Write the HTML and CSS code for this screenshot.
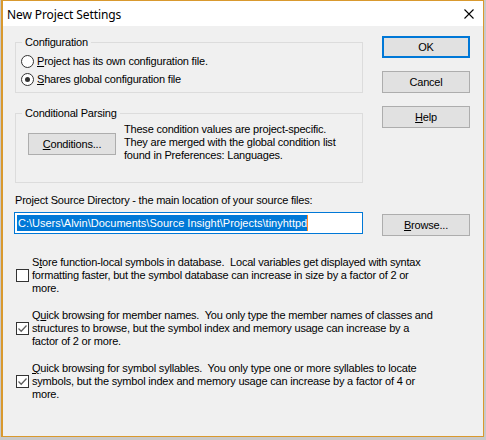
FILE: index.html
```html
<!DOCTYPE html>
<html>
<head>
<meta charset="utf-8">
<title>New Project Settings</title>
<link rel="stylesheet" href="styles.css">
</head>
<body>
<div class="window">
  <div class="titlebar">
    <span class="title">New Project Settings</span>
    <svg class="close" width="10" height="10" viewBox="0 0 10 10"><path d="M0.5 0.5 L9.5 9.5 M9.5 0.5 L0.5 9.5" stroke="#000" stroke-width="1.1" fill="none"/></svg>
  </div>
  <div class="dialog">
    <div class="top">
      <div class="left">
        <div class="group g1">
          <div class="group-title">Configuration</div>
          <div class="opts">
            <div class="opt"><span class="radio"></span><span><u>P</u>roject has its own configuration file.</span></div>
            <div class="opt"><span class="radio on"><span class="dot"></span></span><span><u>S</u>hares global configuration file</span></div>
          </div>
        </div>
        <div class="group g2">
          <div class="group-title">Conditional Parsing</div>
          <div class="cond-row">
            <button class="btn cond"><u>C</u>onditions...</button>
            <p class="cond-text">These condition values are project-specific.<br>They are merged with the global condition list<br>found in Preferences: Languages.</p>
          </div>
        </div>
      </div>
      <div class="right">
        <button class="btn default">OK</button>
        <button class="btn">Cancel</button>
        <button class="btn"><u>H</u>elp</button>
      </div>
    </div>
    <div class="dir-label">Pro<u>j</u>ect Source Directory - the main location of your source files:</div>
    <div class="dir-row">
      <div class="input"><span class="sel">C:\Users\Alvin\Documents\Source Insight\Projects\tinyhttpd</span><span class="caret"></span></div>
      <button class="btn browse"><u>B</u>rowse...</button>
    </div>
    <div class="checks">
      <div class="check-row">
        <span class="checkbox"></span>
        <p>S<u>t</u>ore function-local symbols in database.&nbsp; Local variables get displayed with syntax<br>formatting faster, but the symbol database can increase in size by a factor of 2 or<br>more.</p>
      </div>
      <div class="check-row">
        <span class="checkbox"><svg width="11" height="11" viewBox="0 0 11 11"><path d="M1.5 5.5 L4.2 8.2 L9.5 2.5" stroke="#5f5f5f" stroke-width="1.3" fill="none"/></svg></span>
        <p>Q<u>u</u>ick browsing for member names.&nbsp; You only type the member names of classes and<br>structures to browse, but the symbol index and memory usage can increase by a<br>factor of 2 or more.</p>
      </div>
      <div class="check-row">
        <span class="checkbox"><svg width="11" height="11" viewBox="0 0 11 11"><path d="M1.5 5.5 L4.2 8.2 L9.5 2.5" stroke="#5f5f5f" stroke-width="1.3" fill="none"/></svg></span>
        <p><u>Q</u>uick browsing for symbol syllables.&nbsp; You only type one or more syllables to locate<br>symbols, but the symbol index and memory usage can increase by a factor of 4 or<br>more.</p>
      </div>
    </div>
  </div>
</div>
</body>
</html>
```
FILE: styles.css
```css
html, body {
  margin: 0;
  padding: 0;
}
body {
  background: #c9c9c9;
  font-family: "Liberation Sans", Arial, sans-serif;
  font-size: 11px;
  color: #000;
  overflow: hidden;
}
.window {
  margin-left: 1px;
  width: 480px;
  height: 435px;
  border: 1px solid #d9992e;
  border-left-width: 2px;
  background: #f0f0f0;
}
.titlebar {
  height: 25px;
  background: #fff;
  display: flex;
  align-items: center;
  justify-content: space-between;
  padding-left: 4px;
}
.title {
  font-family: "Noto Sans", "Open Sans", sans-serif;
  font-size: 12px;
  letter-spacing: -0.1px;
  margin-top: 1px;
}
.close {
  margin-right: 9px;
  margin-top: 1px;
}
.dialog {
  padding: 10px 0 0 12px;
  letter-spacing: -0.2px;
  line-height: 13px;
}
.top {
  display: flex;
  gap: 19px;
  align-items: flex-start;
}
.left {
  width: 348px;
  display: flex;
  flex-direction: column;
}
.group {
  border: 1px solid #dcdcdc;
}
.g1 {
  margin-top: 6px;
}
.g2 {
  margin-top: 20px;
  padding-bottom: 20px;
}
.group-title {
  width: fit-content;
  height: 13px;
  line-height: 13px;
  margin: -7px 0 0 6px;
  padding: 0 3px;
  background: #f0f0f0;
}
.opts {
  padding: 3px 0 4px 5px;
}
.opt {
  height: 18px;
  display: flex;
  align-items: center;
}
.radio {
  width: 11px;
  height: 11px;
  border: 1px solid #333;
  border-radius: 50%;
  background: #fff;
  margin-right: 3px;
  display: flex;
  align-items: center;
  justify-content: center;
}
.dot {
  width: 5px;
  height: 5px;
  border-radius: 50%;
  background: #333;
}
.cond-row {
  margin-top: 3px;
  padding-left: 12px;
  display: flex;
  gap: 8px;
}
.cond-text {
  margin: 0;
  white-space: nowrap;
}
.btn {
  box-sizing: border-box;
  width: 88px;
  height: 22px;
  padding: 0;
  background: #e1e1e1;
  border: 1px solid #adadad;
  font-family: "Liberation Sans", Arial, sans-serif;
  font-size: 11px;
  letter-spacing: -0.2px;
  color: #000;
  line-height: 18px;
}
.cond {
  margin-top: 10px;
  flex: none;
}
.default {
  border: 2px solid #0078d7;
}
.right {
  display: flex;
  flex-direction: column;
  gap: 13px;
}
.dir-label {
  margin-top: 11px;
  height: 13px;
}
.dir-row {
  margin-top: 5px;
  display: flex;
  gap: 19px;
  align-items: flex-start;
}
.input {
  box-sizing: border-box;
  width: 349px;
  height: 22px;
  margin-left: -1px;
  border: 1px solid #0078d7;
  background: #fff;
  padding: 2px 0 0 2px;
  display: flex;
  align-items: flex-start;
  letter-spacing: 0;
}
.sel {
  background: #0078d7;
  color: #fff;
  line-height: 16px;
  height: 16px;
  padding: 0 0 0 1px;
  white-space: nowrap;
}
.caret {
  width: 1px;
  height: 16px;
  background: #ff8728;
}
.browse {
  margin-top: 2px;
}
.checks {
  margin-top: 20px;
  display: flex;
  flex-direction: column;
  gap: 14px;
}
.check-row {
  display: flex;
  align-items: center;
  padding-left: 1px;
}
.check-row p {
  margin: 0;
  white-space: nowrap;
}
.checkbox {
  flex: none;
  box-sizing: border-box;
  width: 13px;
  height: 13px;
  border: 1px solid #333;
  background: #fff;
  margin-right: 3px;
  display: flex;
}
```
